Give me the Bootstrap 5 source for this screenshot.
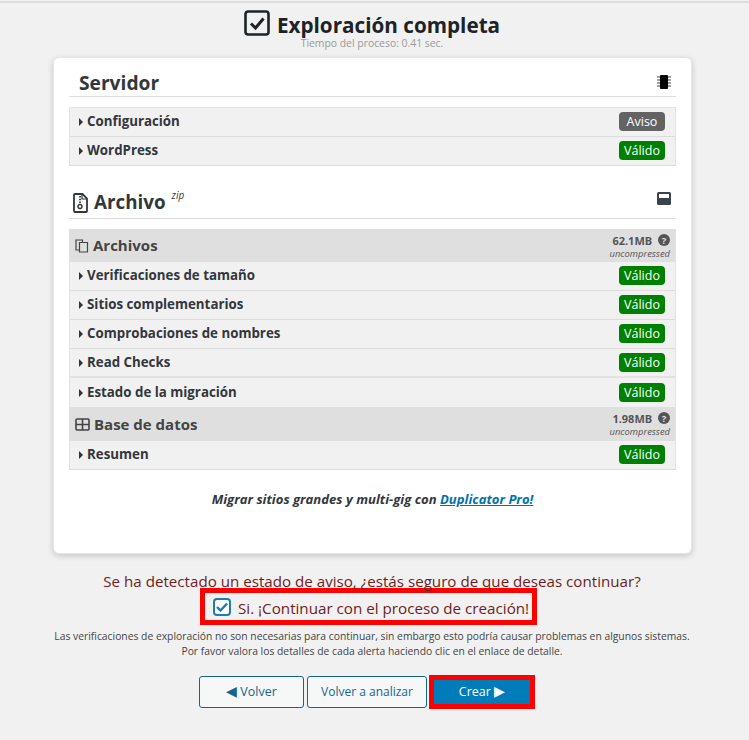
<!DOCTYPE html>
<html lang="es">
<head>
  <meta charset="UTF-8" />
  <meta name="viewport" content="width=device-width, initial-scale=1" />
  <title>Exploración completa</title>
  <link href="https://cdn.jsdelivr.net/npm/bootstrap@5.3.0/dist/css/bootstrap.min.css" rel="stylesheet">
  <style>
    body { background: #f1f1f1; font-family: "Open Sans", sans-serif; color: #444; height: 740px; overflow: hidden; padding-right: 5px; }
    .top-rule { border-top: 2px solid #ddd; margin-top: 1px; margin-right: -5px; }
    .scan-title { height: 34px; margin-top: 3px; font-size: 20.7px; font-weight: 700; color: #1d2327; gap: 7px; line-height: 26px; }
    .title-text { margin-top: 3px; }
    .scan-time { font-size: 10.4px; color: #999; line-height: 12px; margin-top: -3px; height: 14px; }
    .scan-box { width: 639px; height: 497px; margin: 6px 0 0 53px; background: #fff; border: 1px solid #e6e6e6; border-radius: 6px; box-shadow: 0 2px 6px rgba(0,0,0,.18); padding: 0 15px; }
    .sect-head { height: 39px; border-bottom: 1px solid #ddd; color: #32373c; font-weight: 700; font-size: 19.2px; padding: 12px 5px 0 10px; }
    .chip-icon { margin-top: -3px; }
    .sect-head.zip-head { height: 39px; margin-top: 14px; padding-left: 4px; padding-top: 7px; font-size: 18.8px; }
    .disk-icon { margin-top: -9px; }
    .zip-name { margin-left: 2px; }
    .zip-tag { font-size: 10px; font-weight: 400; font-style: italic; align-self: flex-start; margin: 0 0 0 2px; }
    .check-group { margin-top: 10px; border: 1px solid #e2e2e2; border-width: 1px 1px 0; background: #f1f1f1; }
    .check-group.files-group { border-top: 0; }
    .check-row { height: 29px; border-bottom: 1px solid #ddd; padding: 0 10px 0 9px; font-size: 13.3px; font-weight: 700; color: #32373c; }
    .check-row.last-row { border-bottom: 2px solid #e2e2e2; }
    .caret-mark { width: 0; height: 0; border-left: 4px solid #333; border-top: 4px solid transparent; border-bottom: 4px solid transparent; margin-right: 4px; }
    .state-pill { width: 46px; height: 19px; border-radius: 4px; font-size: 12.5px; font-weight: 400; color: #fff; line-height: 19px; text-align: center; background: #008000; margin-top: -1px; }
    .state-pill.warn-pill { background: #636363; }
    .group-head { height: 33px; background: #dfdfdf; padding: 0 5px; color: #444; font-size: 15px; font-weight: 700; }
    .group-head.db-head { height: 34px; }
    .size-note { text-align: right; line-height: 14px; font-size: 11px; font-weight: 700; color: #555; padding-top: 2px; }
    .size-note svg { vertical-align: -1px; margin-left: 3px; }
    .size-note em { display: block; font-size: 9.4px; line-height: 12px; font-weight: 400; color: #555; }
    .pro-note { margin-top: 20px; font-size: 13.1px; font-weight: 700; font-style: italic; color: #32373c; }
    .pro-note a { color: #0073aa; }
    .warn-text { margin-top: 17px; font-size: 15.15px; line-height: 20px; color: #6f1d1d; }
    .confirm-box { width: 337px; height: 37px; margin: -3px 0 0 200px; border: 5px solid #f00; font-size: 15.2px; color: #6f1d1d; padding-left: 8px; }
    .confirm-label { margin-top: 3px; }
    .fake-check { width: 18px; height: 18px; border: 2px solid #1b7eae; border-radius: 4px; background: #fff; margin-right: 7px; }
    .fine-print { margin-top: 4px; font-size: 10.33px; line-height: 15px; color: #444; }
    .action-row { margin-top: 17px; gap: 3px; padding-left: 199px; }
    .act-btn { height: 32px; font-size: 12px; color: #17658c; border: 1px solid #17658c; border-radius: 3px; background: #f6f7f7; padding: 0; line-height: 30px; }
    .act-btn:first-child { width: 105px; font-size: 12.5px; }
    .act-btn.again-btn { width: 120px; }
    .crear-wrap { border: 5px solid #f00; margin: -1px 0 0 -1px; height: 34px; width: 106px; }
    .crear-btn { height: 24px; line-height: 24px; background: #007cba; color: #fff; font-size: 12.5px; text-align: center; }
    .tri { font-size: 14px; line-height: 1; }
  </style>
</head>
<body>
  <div class="top-rule"></div>

  <div class="scan-title d-flex justify-content-center align-items-center">
    <svg width="26" height="26" viewBox="0 0 26 26" fill="none" stroke="#1d2327"><rect x="1.5" y="1.5" width="23" height="23" rx="2.5" stroke-width="2.6"/><path d="M7 13.5l4.5 4.5L19.5 8.5" stroke-width="3"/></svg>
    <span class="title-text">Exploración completa</span>
  </div>
  <div class="scan-time text-center">Tiempo del proceso: 0.41 sec.</div>

  <div class="scan-box">
    <div class="sect-head d-flex justify-content-between align-items-center">
      <span>Servidor</span>
      <svg class="chip-icon" width="14" height="14" viewBox="0 0 14 14"><rect x="3" y="0" width="8" height="14" rx="1" fill="#000"/><path d="M0 2h3M0 5h3M0 8h3M0 11h3M11 2h3M11 5h3M11 8h3M11 11h3" stroke="#444" stroke-width="1.2"/></svg>
    </div>
    <div class="check-group">
      <div class="check-row d-flex align-items-center justify-content-between">
        <span class="d-flex align-items-center"><span class="caret-mark"></span>Configuración</span>
        <span class="state-pill warn-pill">Aviso</span>
      </div>
      <div class="check-row d-flex align-items-center justify-content-between">
        <span class="d-flex align-items-center"><span class="caret-mark"></span>WordPress</span>
        <span class="state-pill">Válido</span>
      </div>
    </div>

    <div class="sect-head zip-head d-flex justify-content-between align-items-center">
      <span class="d-flex align-items-center gap-1">
        <svg width="15" height="20" viewBox="0 0 15 20" fill="none" stroke="#32373c" stroke-width="1.8"><path d="M2 1h7.5l4.5 4.5V18a1 1 0 0 1-1 1H2a1 1 0 0 1-1-1V2a1 1 0 0 1 1-1z"/><path d="M9 1v5h5" stroke-width="1.2"/><path d="M7 3v7" stroke-dasharray="1.5 1.2"/><circle cx="7" cy="13.5" r="2" fill="#fff" stroke-width="1.4"/></svg>
        <span class="zip-name">Archivo</span><span class="zip-tag">zip</span>
      </span>
      <svg class="disk-icon" width="14" height="13" viewBox="0 0 14 13"><rect x="0" y="0" width="14" height="13" rx="1.5" fill="#3c434a"/><rect x="2" y="2" width="10" height="4" fill="#fff"/></svg>
    </div>

    <div class="check-group files-group">
      <div class="group-head d-flex align-items-center justify-content-between">
        <span class="d-flex align-items-center gap-1">
          <svg width="14" height="14" viewBox="0 0 14 14" fill="none" stroke="#444" stroke-width="1.2"><path d="M4.5 3.5h8v9.5h-8zM4.5 11H1V1h6.5v2.5"/></svg>
          Archivos
        </span>
        <div class="size-note">62.1MB <svg width="12" height="12" viewBox="0 0 12 12"><circle cx="6" cy="6" r="6" fill="#555"/><text x="6" y="9.5" font-size="9.5" font-weight="700" fill="#dfdfdf" text-anchor="middle" font-family="Open Sans, sans-serif">?</text></svg><em>uncompressed</em></div>
      </div>
      <div class="check-row d-flex align-items-center justify-content-between">
        <span class="d-flex align-items-center"><span class="caret-mark"></span>Verificaciones de tamaño</span>
        <span class="state-pill">Válido</span>
      </div>
      <div class="check-row d-flex align-items-center justify-content-between">
        <span class="d-flex align-items-center"><span class="caret-mark"></span>Sitios complementarios</span>
        <span class="state-pill">Válido</span>
      </div>
      <div class="check-row d-flex align-items-center justify-content-between">
        <span class="d-flex align-items-center"><span class="caret-mark"></span>Comprobaciones de nombres</span>
        <span class="state-pill">Válido</span>
      </div>
      <div class="check-row last-row d-flex align-items-center justify-content-between">
        <span class="d-flex align-items-center"><span class="caret-mark"></span>Read Checks</span>
        <span class="state-pill">Válido</span>
      </div>
      <div class="check-row border-0 d-flex align-items-center justify-content-between">
        <span class="d-flex align-items-center"><span class="caret-mark"></span>Estado de la migración</span>
        <span class="state-pill">Válido</span>
      </div>
      <div class="group-head db-head d-flex align-items-center justify-content-between">
        <span class="d-flex align-items-center gap-1">
          <svg width="15" height="13" viewBox="0 0 15 13" fill="none" stroke="#444" stroke-width="1.6"><rect x="1" y="1" width="13" height="11" rx="1"/><path d="M1 6.5h13M7.5 1v11"/></svg>
          Base de datos
        </span>
        <div class="size-note">1.98MB <svg width="12" height="12" viewBox="0 0 12 12"><circle cx="6" cy="6" r="6" fill="#555"/><text x="6" y="9.5" font-size="9.5" font-weight="700" fill="#dfdfdf" text-anchor="middle" font-family="Open Sans, sans-serif">?</text></svg><em>uncompressed</em></div>
      </div>
      <div class="check-row d-flex align-items-center justify-content-between">
        <span class="d-flex align-items-center"><span class="caret-mark"></span>Resumen</span>
        <span class="state-pill">Válido</span>
      </div>
    </div>

    <div class="pro-note text-center">Migrar sitios grandes y multi-gig con <a href="#">Duplicator Pro!</a></div>
  </div>

  <div class="warn-text text-center">Se ha detectado un estado de aviso, ¿estás seguro de que deseas continuar?</div>
  <div class="confirm-box d-flex align-items-center">
    <span class="fake-check d-flex align-items-center justify-content-center">
      <svg width="12" height="10" viewBox="0 0 12 10" fill="none" stroke="#1b7eae" stroke-width="2.4"><path d="M1 5l3.5 3.5L11 1.5"/></svg>
    </span>
    <span class="confirm-label">Si. ¡Continuar con el proceso de creación!</span>
  </div>
  <div class="fine-print text-center">
    Las verificaciones de exploración no son necesarias para continuar, sin embargo esto podría causar problemas en algunos sistemas.<br>
    Por favor valora los detalles de cada alerta haciendo clic en el enlace de detalle.
  </div>
  <div class="action-row d-flex align-items-start">
    <button type="button" class="act-btn"><span class="tri">◀</span> Volver</button>
    <button type="button" class="act-btn again-btn">Volver a analizar</button>
    <div class="crear-wrap"><div class="crear-btn">Crear <span class="tri">▶</span></div></div>
  </div>

  <script src="https://cdn.jsdelivr.net/npm/bootstrap@5.3.0/dist/js/bootstrap.bundle.min.js"></script>
</body>
</html>
